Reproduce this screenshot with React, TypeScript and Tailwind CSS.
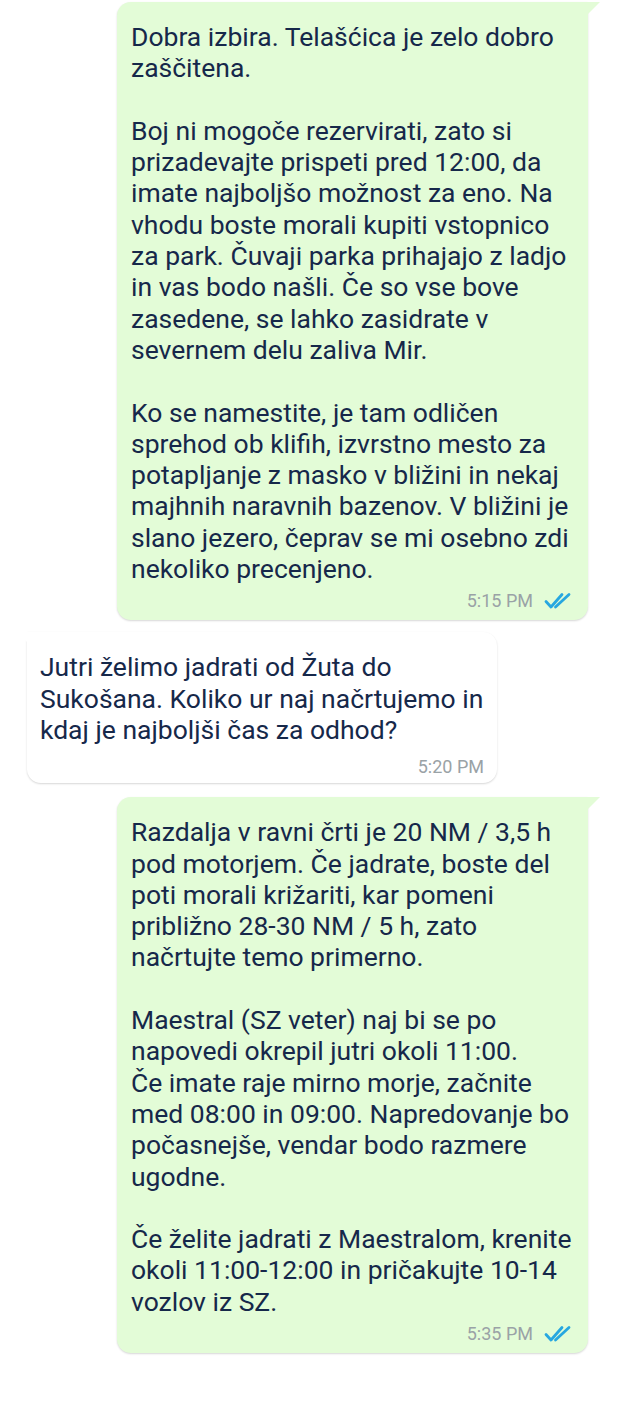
import React from 'react'

type Msg = {
  out: boolean
  text: string
  time: string
}

const messages: Msg[] = [
  {
    out: true,
    text:
      'Dobra izbira. Telašćica je zelo dobro zaščitena.\n\nBoj ni mogoče rezervirati, zato si prizadevajte prispeti pred 12:00, da imate najboljšo možnost za eno. Na vhodu boste morali kupiti vstopnico za park. Čuvaji parka prihajajo z ladjo in vas bodo našli. Če so vse bove zasedene, se lahko zasidrate v severnem delu zaliva Mir.\n\nKo se namestite, je tam odličen sprehod ob klifih, izvrstno mesto za potapljanje z masko v bližini in nekaj majhnih naravnih bazenov. V bližini je slano jezero, čeprav se mi osebno zdi nekoliko precenjeno.',
    time: '5:15 PM',
  },
  {
    out: false,
    text: 'Jutri želimo jadrati od Žuta do Sukošana. Koliko ur naj načrtujemo in kdaj je najboljši čas za odhod?',
    time: '5:20 PM',
  },
  {
    out: true,
    text:
      'Razdalja v ravni črti je 20 NM / 3,5 h pod motorjem. Če jadrate, boste del poti morali križariti, kar pomeni približno 28-30 NM / 5 h, zato načrtujte temo primerno.\n\nMaestral (SZ veter) naj bi se po napovedi okrepil jutri okoli 11:00.\nČe imate raje mirno morje, začnite med 08:00 in 09:00. Napredovanje bo počasnejše, vendar bodo razmere ugodne.\n\nČe želite jadrati z Maestralom, krenite okoli 11:00-12:00 in pričakujte 10-14 vozlov iz SZ.',
    time: '5:35 PM',
  },
]

function Ticks() {
  return (
    <svg width="28" height="18" viewBox="0 0 28 18" fill="none" stroke="#27a7e0" strokeWidth="2.8" strokeLinecap="round" strokeLinejoin="round">
      <path d="M2 9.5 L7 15 L18 2.5" />
      <path d="M11.5 15 L25 2.5" />
    </svg>
  )
}

function Bubble({ msg }: { msg: Msg }) {
  return (
    <div
      className={`relative rounded-[14px] shadow-[0_1px_2px_rgba(0,0,0,0.16)] ${
        msg.out
          ? 'ml-[117px] w-[471px] rounded-tr-none bg-[#e3fcd7] pl-[14px] pr-[14px] pb-[8px]'
          : 'ml-[27px] w-[470px] rounded-tl-none bg-white pl-[13px] pr-[13px] pb-[5px]'
      } pt-[19px]`}
    >
      {msg.out ? (
        <svg className="absolute -right-[12px] top-0" width="12" height="12" viewBox="0 0 12 12">
          <path d="M0 0 L12 0 L0 12 Z" fill="#e3fcd7" />
        </svg>
      ) : (
        <svg className="absolute -left-[10px] top-0" width="10" height="10" viewBox="0 0 10 10">
          <path d="M10 0 L0 0 L10 10 Z" fill="#ffffff" />
        </svg>
      )}
      <p className="whitespace-pre-wrap text-[26.5px] leading-[31.3px] text-[#16284a]">{msg.text}</p>
      <div className={`flex items-center justify-end gap-[11px] ${msg.out ? 'mt-[6px] pr-[2px]' : 'mt-[11px]'}`}>
        <span className="text-[18px] leading-[22px] text-[#9aa2a6]">{msg.time}</span>
        {msg.out && <Ticks />}
      </div>
    </div>
  )
}

export default function App() {
  return (
    <div className="min-h-[1403px] w-[630px] bg-white pt-[2px] font-['Roboto',sans-serif]">
      <div className="flex flex-col">
        <Bubble msg={messages[0]} />
        <div className="h-[12px]" />
        <Bubble msg={messages[1]} />
        <div className="h-[14px]" />
        <Bubble msg={messages[2]} />
      </div>
    </div>
  )
}
